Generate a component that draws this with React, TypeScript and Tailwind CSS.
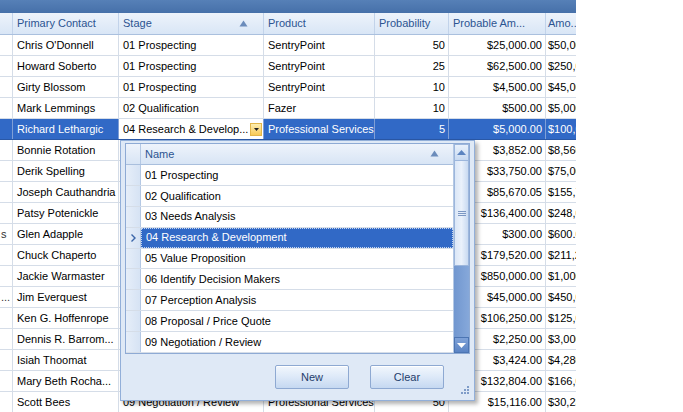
import React from "react";

type Row = {
  lead?: string;
  contact: string;
  stage: string;
  product: string;
  prob: string;
  probable: string;
  amount: string;
};

// rows 6..17 sit under the drop-down, so their middle cells stay empty
const rows: Row[] = [
  { contact: "Chris O'Donnell", stage: "01 Prospecting", product: "SentryPoint", prob: "50", probable: "$25,000.00", amount: "$50,000.00" },
  { contact: "Howard Soberto", stage: "01 Prospecting", product: "SentryPoint", prob: "25", probable: "$62,500.00", amount: "$250,000.00" },
  { contact: "Girty Blossom", stage: "01 Prospecting", product: "SentryPoint", prob: "10", probable: "$4,500.00", amount: "$45,000.00" },
  { contact: "Mark Lemmings", stage: "02 Qualification", product: "Fazer", prob: "10", probable: "$500.00", amount: "$5,000.00" },
  { contact: "Richard Lethargic", stage: "04 Research & Develop...", product: "Professional Services", prob: "5", probable: "$5,000.00", amount: "$100,000.00" },
  { contact: "Bonnie Rotation", stage: "", product: "", prob: "", probable: "$3,852.00", amount: "$8,560.00" },
  { contact: "Derik Spelling", stage: "", product: "", prob: "", probable: "$33,750.00", amount: "$75,000.00" },
  { contact: "Joseph Cauthandria", stage: "", product: "", prob: "", probable: "$85,670.05", amount: "$155,764.00" },
  { contact: "Patsy Potenickle", stage: "", product: "", prob: "", probable: "$136,400.00", amount: "$248,000.00" },
  { lead: "s", contact: "Glen Adapple", stage: "", product: "", prob: "", probable: "$300.00", amount: "$600.00" },
  { contact: "Chuck Chaperto", stage: "", product: "", prob: "", probable: "$179,520.00", amount: "$211,200.00" },
  { contact: "Jackie Warmaster", stage: "", product: "", prob: "", probable: "$850,000.00", amount: "$1,000,000.00" },
  { lead: "...", contact: "Jim Everquest", stage: "", product: "", prob: "", probable: "$45,000.00", amount: "$450,000.00" },
  { contact: "Ken G. Hoffenrope", stage: "", product: "", prob: "", probable: "$106,250.00", amount: "$125,000.00" },
  { contact: "Dennis R. Barrom...", stage: "", product: "", prob: "", probable: "$2,250.00", amount: "$3,000.00" },
  { contact: "Isiah  Thoomat", stage: "", product: "", prob: "", probable: "$3,424.00", amount: "$4,280.00" },
  { contact: "Mary Beth Rocha...", stage: "", product: "", prob: "", probable: "$132,804.00", amount: "$166,005.00" },
  { contact: "Scott Bees", stage: "09 Negotiation / Review", product: "Professional Services", prob: "50", probable: "$15,116.00", amount: "$30,232.00" },
];

const stages = [
  "01 Prospecting",
  "02 Qualification",
  "03 Needs Analysis",
  "04 Research & Development",
  "05 Value Proposition",
  "06 Identify Decision Makers",
  "07 Perception Analysis",
  "08 Proposal / Price Quote",
  "09 Negotiation / Review",
];

const cols = "grid grid-cols-[13px_106px_145px_111px_74px_97px_30px]";

function SortArrow() {
  return (
    <svg width="9" height="7" viewBox="0 0 9 7">
      <path d="M4.5 0.5 L8.5 6.5 L0.5 6.5 Z" fill="#6b8cbb" />
    </svg>
  );
}

function DataRow({ row, selected }: { row: Row; selected: boolean }) {
  const line = selected ? "border-[#7f9fd6]" : "border-[#d5dde8]";
  const base = `flex items-center overflow-hidden whitespace-nowrap border-r ${line}`;
  return (
    <div className={`${cols} h-[21px] border-b ${selected ? "border-[#2a58a6] bg-[#3169c6] text-white" : "border-[#d5dde8]"}`}>
      <div className={`${base} pl-[1px] text-[#333]`}>{row.lead}</div>
      <div className={`${base} px-1`}>{row.contact}</div>
      {selected ? (
        <div className="flex items-center overflow-hidden whitespace-nowrap border-r border-[#7f9fd6] bg-white py-[1px] pl-1 pr-[1px] text-black">
          <span className="flex-1 overflow-hidden">{row.stage}</span>
          <span className="flex h-[13px] w-[12px] items-center justify-center border border-[#e3b64a] bg-gradient-to-b from-[#fdeeb0] to-[#f7c955]">
            <svg width="5" height="3" viewBox="0 0 5 3">
              <path d="M0 0 H5 L2.5 3 Z" fill="#222" />
            </svg>
          </span>
        </div>
      ) : (
        <div className={`${base} px-1`}>{row.stage}</div>
      )}
      <div className={`${base} px-1`}>{row.product}</div>
      <div className={`${base} justify-end pr-[3px]`}>{row.prob}</div>
      <div className={`${base} justify-end pr-[3px]`}>{row.probable}</div>
      <div className="flex items-center overflow-hidden whitespace-nowrap pl-[2px]">{row.amount}</div>
    </div>
  );
}

function StagePopup() {
  return (
    <div className="absolute left-[120px] top-[140px] flex h-[261px] w-[355px] flex-col border border-[#92afd9] bg-[#dfe9f6] shadow-[3px_3px_4px_rgba(0,0,0,0.3)]">
      <div className="ml-[4px] mt-[2px] flex h-[211px] w-[345px] border border-[#8eaad4] bg-white">
        <div className="flex flex-1 flex-col">
          {/* header */}
          <div className="flex h-[21px] border-b border-[#a9bfdd] bg-gradient-to-b from-[#eef3fb] to-[#d8e5f5]">
            <div className="w-[15px] border-r border-[#b4c8e4]" />
            <div className="flex flex-1 items-center justify-between pl-[4px] pr-[14px] text-[#2c5491]">
              <span>Name</span>
              <SortArrow />
            </div>
          </div>
          {stages.map((s, i) => {
            const sel = i === 3;
            return (
              <div key={s} className="flex h-[21px] border-b border-[#d5dde8]">
                <div className="flex w-[15px] items-center justify-center border-r border-[#b4c8e4] bg-gradient-to-r from-[#e6eef9] to-[#d6e3f4]">
                  {sel && (
                    <svg width="5" height="8" viewBox="0 0 5 8">
                      <path d="M0.5 0.5 L4 4 L0.5 7.5" stroke="#3a65a8" strokeWidth="1.4" fill="none" />
                    </svg>
                  )}
                </div>
                <div
                  className={`flex flex-1 items-center whitespace-nowrap pl-[4px] ${
                    sel ? "border border-dotted border-[#c6d6f0] bg-[#3169c6] text-white" : ""
                  }`}
                >
                  {s}
                </div>
              </div>
            );
          })}
        </div>
        {/* scrollbar */}
        <div className="flex w-[16px] flex-col border-l border-[#b4c8e4] bg-[#d9e5f5]">
          <div className="flex h-[17px] items-center justify-center border border-[#9cb6dc] bg-gradient-to-b from-[#e9f1fb] to-[#c7d9f1]">
            <svg width="9" height="5" viewBox="0 0 9 5">
              <path d="M4.5 0 L9 5 H0 Z" fill="#5b84c0" />
            </svg>
          </div>
          <div className="flex h-[105px] items-center justify-center border-x border-b border-[#9cb6dc] bg-gradient-to-r from-[#dbe7f7] via-[#eaf1fb] to-[#c9daf1]">
            <div className="flex flex-col gap-[1px]">
              <div className="h-[1px] w-[8px] bg-[#7b97c3]" />
              <div className="h-[1px] w-[8px] bg-[#7b97c3]" />
              <div className="h-[1px] w-[8px] bg-[#7b97c3]" />
            </div>
          </div>
          <div className="flex-1 bg-gradient-to-r from-[#7197d0] to-[#86a8da]" />
          <div className="flex h-[16px] items-center justify-center border border-[#4c75b3] bg-gradient-to-b from-[#7fa2d8] to-[#5b84c4]">
            <svg width="9" height="5" viewBox="0 0 9 5">
              <path d="M0 0 H9 L4.5 5 Z" fill="#ffffff" />
            </svg>
          </div>
        </div>
      </div>
      {/* footer */}
      <div className="relative flex flex-1 items-start justify-end gap-[21px] pr-[30px] pt-[11px]">
        {["New", "Clear"].map((b) => (
          <button
            key={b}
            className="flex h-[24px] w-[74px] items-center justify-center rounded-[2px] border border-[#8ea9d2] bg-gradient-to-b from-[#f2f7fd] via-[#dde9f8] to-[#c5d8f1] text-[#1f3d6b] shadow-[inset_0_1px_0_#ffffff]"
          >
            {b}
          </button>
        ))}
        <div className="absolute bottom-[6px] right-[5px] grid grid-cols-3 gap-[1px]">
          {[0, 0, 1, 0, 1, 1, 1, 1, 1].map((v, i) => (
            <div key={i} className={`h-[2px] w-[2px] ${v ? "bg-[#7f9cc8]" : "bg-transparent"}`} />
          ))}
        </div>
      </div>
    </div>
  );
}

export default function App() {
  return (
    <div className="relative h-[412px] w-[683px] overflow-hidden bg-white font-['Liberation_Sans',Arial,sans-serif] text-[11px] text-black">
      <div className="w-[576px]">
        <div className="h-[13px] bg-gradient-to-b from-[#5680b7] to-[#4670a9]" />
        <div className={`${cols} h-[22px] border-b border-[#aac0de] bg-gradient-to-b from-[#edf3fb] to-[#d9e6f6] text-[#2c5491]`}>
          <div className="border-r border-[#c2d3ea]" />
          <div className="flex items-center border-r border-[#c2d3ea] px-1">Primary Contact</div>
          <div className="flex items-center justify-between border-r border-[#c2d3ea] pl-1 pr-[15px]">
            <span>Stage</span>
            <SortArrow />
          </div>
          <div className="flex items-center overflow-hidden whitespace-nowrap border-r border-[#c2d3ea] px-1">Product</div>
          <div className="flex items-center overflow-hidden whitespace-nowrap border-r border-[#c2d3ea] px-1">Probability</div>
          <div className="flex items-center overflow-hidden whitespace-nowrap border-r border-[#c2d3ea] px-1">Probable Am...</div>
          <div className="flex items-center overflow-hidden whitespace-nowrap pl-[2px]">Amo...</div>
        </div>
        {rows.map((r, i) => (
          <DataRow key={i} row={r} selected={i === 4} />
        ))}
      </div>
      <StagePopup />
    </div>
  );
}
